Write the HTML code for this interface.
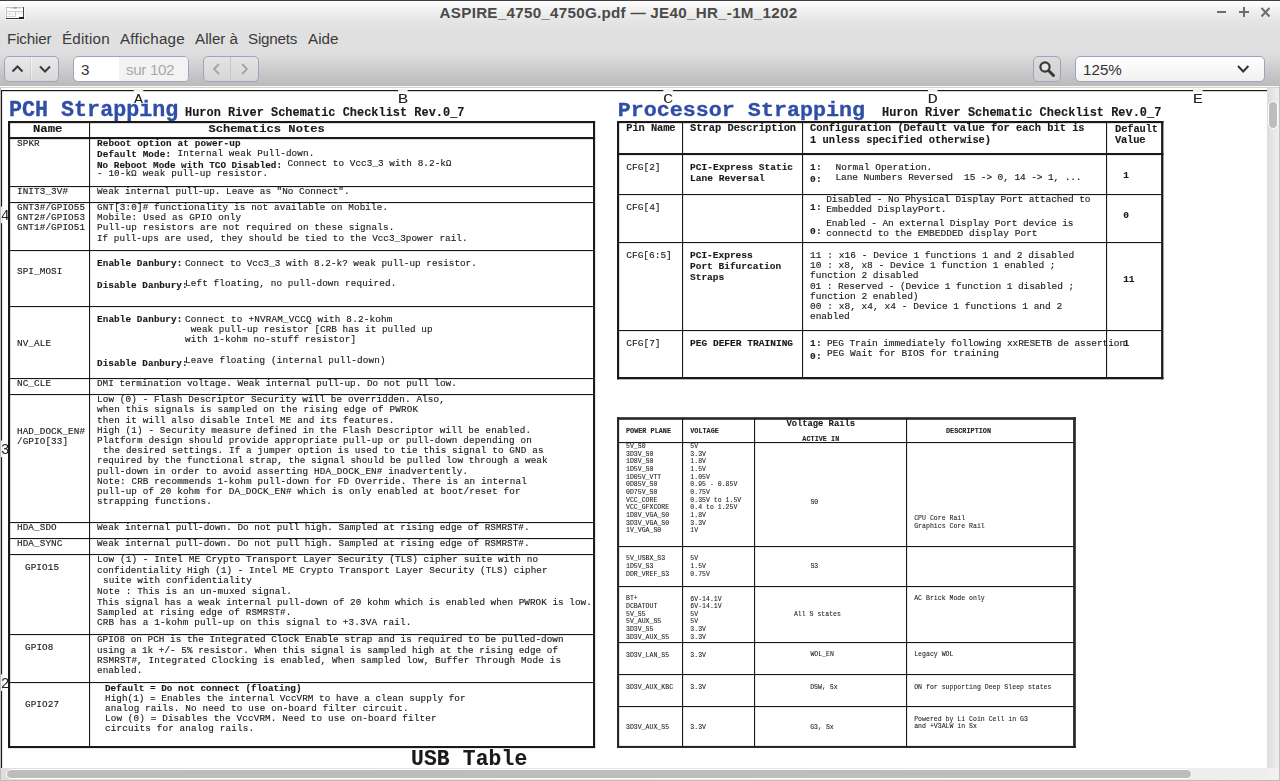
<!DOCTYPE html>
<html lang="fr"><head><meta charset="utf-8">
<title>ASPIRE_4750_4750G.pdf — JE40_HR_-1M_1202</title>
<style>
html,body{margin:0;padding:0;}
body{width:1280px;height:781px;overflow:hidden;position:relative;background:#fff;font-family:"Liberation Sans",sans-serif;color:#3c3c3c;}
.abs{position:absolute;}
#top{left:0;top:0;width:1280px;height:86px;background:linear-gradient(#ffffff 0px,#ffffff 1px,#f4f4f4 8px,#e6e6e6 20px,#e1e1e1 27px,#dfdfdf 53px,#d5d5d5 62px,#c9c9c9 72px,#c0c0c0 80px,#bbbbbb 86px);}
#topline{left:0;top:0;width:1280px;height:1px;background:#3e3e3e;}
#title{left:0;top:3px;width:1237px;text-align:center;font-weight:bold;font-size:15.2px;letter-spacing:.27px;line-height:20px;color:#4a4a4a;white-space:pre;}
.menu{top:29px;font-size:15.2px;line-height:20px;color:#3a3a3a;white-space:pre;}
.btn{box-sizing:border-box;border:1px solid #9aa6bf;border-radius:5px;background:linear-gradient(#e9e9e9,#d8d8d8);}
.entry{box-sizing:border-box;border:1px solid #9aa6bf;border-radius:5px;background:#fff;}
.sep{width:1px;background:linear-gradient(#f4f4f4,#c4c4c4);}
#view{left:0;top:86px;width:1280px;height:695px;background:#fff;}
#viewtop{left:0;top:86px;width:1280px;height:2px;background:linear-gradient(#f8f8f8 0,#f8f8f8 1px,#d6d3cd 1px,#d6d3cd 2px);}
#vscroll{left:1267px;top:88px;width:12px;height:680px;background:linear-gradient(90deg,#dcdcdc,#f0f0f0);}
#vthumb{box-sizing:border-box;left:1268px;top:101px;width:10px;height:28px;border-radius:5px;background:#bdbdbd;border:1px solid #fff;}
#hscroll{left:1px;top:768px;width:1278px;height:12px;background:linear-gradient(90deg,#dedede 0,#e6e6e6 40%,#eeeeee 100%);}
#hthumb{box-sizing:border-box;left:6px;top:769px;width:1186px;height:10px;border-radius:5px;background:#bdbdbd;border:1px solid #fff;}
#edgeL{left:0;top:88px;width:1px;height:693px;background:#c2beb7;}
#edgeR{left:1279px;top:86px;width:1px;height:695px;background:#c6c2bb;}
#edgeB{left:0;top:780px;width:1280px;height:1px;background:#c2beb7;}
#corner{left:1267px;top:768px;width:12px;height:12px;background:#f0f0ee;}
svg.page{fill:#1a1a1a;will-change:transform;}
svg.page text{font-family:'Liberation Mono',monospace;white-space:pre;}
</style></head><body>
<div class="abs" id="top"></div>
<div class="abs" id="topline"></div>
<!-- window icon -->
<svg class="abs" style="left:5px;top:6px" width="20" height="14" viewBox="-1 -1 20 14"><rect x="-1" y="-1" width="20" height="14" fill="#fbfbfb" opacity=".7"/><rect x="0" y="0" width="18" height="12" fill="#fff"/><rect x="0" y="0" width="1" height="12" fill="#c2c2c2"/><rect x="0" y="0" width="18" height="0.8" fill="#b4b4b4"/><rect x="17" y="0" width="1" height="12" fill="#454545"/><rect x="0" y="11" width="18" height="1" fill="#333"/><rect x="7.3" y="0.3" width="3.6" height="1.3" fill="#8c8c8c"/><rect x="4" y="1.3" width="3" height=".6" fill="#cfcfcf"/><rect x="12" y="1.3" width="3" height=".6" fill="#cfcfcf"/><rect x="1" y="4.3" width="16" height=".7" fill="#b9b9b9"/><rect x="9.1" y="4.5" width=".8" height="5" fill="#b9b9b9"/><rect x="1" y="9" width="8.6" height=".7" fill="#c4c4c4"/><rect x="1.5" y="6" width="5" height=".6" fill="#dcdcdc"/><rect x="1.5" y="7.4" width="6.5" height=".6" fill="#dcdcdc"/><rect x="10.5" y="5.8" width="6" height=".6" fill="#d0d0d0"/><rect x="13" y="10" width="5" height="2" fill="#222"/></svg>
<div class="abs" id="title">ASPIRE_4750_4750G.pdf — JE40_HR_-1M_1202</div>
<!-- window buttons -->
<svg class="abs" style="left:1210px;top:4px" width="66" height="17" viewBox="0 0 66 17"><g stroke="#6e6e6e" stroke-width="2" fill="none"><path d="M7 8H16"/><path d="M29 8H39M34 3V13"/><path d="M51.5 4L59.5 12.5M59.5 4L51.5 12.5"/></g></svg>
<!-- menu -->
<div class="abs menu" style="left:7px;letter-spacing:-.15px">Fichier</div>
<div class="abs menu" style="left:62px;letter-spacing:.2px">Édition</div>
<div class="abs menu" style="left:120px;letter-spacing:.2px">Affichage</div>
<div class="abs menu" style="left:195px">Aller à</div>
<div class="abs menu" style="left:248px;letter-spacing:-.2px">Signets</div>
<div class="abs menu" style="left:308px">Aide</div>
<!-- toolbar -->
<div class="abs btn" style="left:4px;top:56px;width:55px;height:26px"></div>
<div class="abs" style="left:30px;top:57px;width:1px;height:24px;background:linear-gradient(#dadada,#c4c4c4)"></div><div class="abs" style="left:31px;top:57px;width:1px;height:24px;background:linear-gradient(#f8f8f8,#e8e8e8)"></div>
<svg class="abs" style="left:4px;top:56px" width="55" height="26" viewBox="0 0 55 26"><g stroke="#3a3a3a" stroke-width="2" fill="none"><path d="M8.5 15.5L13.5 10.5L18.5 15.5"/><path d="M36 10.5L41 15.5L46 10.5"/></g></svg>
<div class="abs entry" style="left:73px;top:56px;width:116px;height:26px;overflow:hidden"><div class="abs" style="left:45px;top:0;width:70px;height:24px;background:#f3f3f3"></div>
<div class="abs" style="left:7px;top:3px;font-size:15.2px;line-height:20px;color:#333">3</div>
<div class="abs" style="left:52px;top:3px;font-size:15.2px;line-height:20px;color:#a9a9a9;white-space:pre;letter-spacing:-.35px">sur 102</div></div>
<div class="abs btn" style="left:203px;top:56px;width:56px;height:26px;background:linear-gradient(#e4e4e4,#d6d6d6)"></div>
<div class="abs sep" style="left:230px;top:57px;height:24px;background:#c6c6c6"></div>
<svg class="abs" style="left:203px;top:56px" width="56" height="26" viewBox="0 0 56 26"><g stroke="#a4a4a4" stroke-width="1.8" fill="none"><path d="M16 8L11 13L16 18"/><path d="M39 8L44 13L39 18"/></g></svg>
<div class="abs btn" style="left:1033px;top:56px;width:28px;height:26px;background:linear-gradient(#dcdcdc,#d0d0d0)"></div>
<svg class="abs" style="left:1033px;top:56px" width="28" height="26" viewBox="0 0 28 26"><circle cx="12" cy="11" r="4.6" stroke="#3a3a3a" stroke-width="2.2" fill="#e6e6e6"/><path d="M15.5 14.5L20.5 19.5" stroke="#3a3a3a" stroke-width="3" stroke-linecap="round"/></svg>
<div class="abs entry" style="left:1075px;top:56px;width:190px;height:26px;background:linear-gradient(#ffffff,#f1f1f1)"></div>
<div class="abs" style="left:1083px;top:60px;font-size:15.2px;line-height:20px;color:#333">125%</div>
<svg class="abs" style="left:1234px;top:62px" width="18" height="14" viewBox="0 0 18 14"><path d="M4 4L9.2 9.5L14.4 4" stroke="#333" stroke-width="2" fill="none"/></svg>
<!-- document view -->
<div class="abs" id="view"></div>
<div class="abs" id="viewtop"></div>
<svg class="abs page" style="left:0;top:0" width="1267" height="768" viewBox="0 0 1267 768">
<rect x="1.00" y="90.00" width="1266.00" height="1.20" fill="#1c1819"/>
<rect x="1.00" y="90.00" width="1.10" height="678.00" fill="#1c1819"/>
<rect x="133.70" y="89.00" width="9.60" height="3.00" fill="#f0f0f0"/>
<text x="134.10" y="102.8" font-size="13.4" font-family="'Liberation Sans',sans-serif" fill="#222" textLength="9.0" lengthAdjust="spacingAndGlyphs">A</text>
<rect x="398.10" y="89.00" width="9.60" height="3.00" fill="#f0f0f0"/>
<text x="397.80" y="102.8" font-size="13.4" font-family="'Liberation Sans',sans-serif" fill="#222" textLength="10.4" lengthAdjust="spacingAndGlyphs">B</text>
<rect x="663.30" y="89.00" width="9.60" height="3.00" fill="#f0f0f0"/>
<text x="663.00" y="102.8" font-size="13.4" font-family="'Liberation Sans',sans-serif" fill="#222" textLength="10.4" lengthAdjust="spacingAndGlyphs">C</text>
<rect x="927.90" y="89.00" width="9.60" height="3.00" fill="#f0f0f0"/>
<text x="927.60" y="102.8" font-size="13.4" font-family="'Liberation Sans',sans-serif" fill="#222" textLength="10.4" lengthAdjust="spacingAndGlyphs">D</text>
<rect x="1193.00" y="89.00" width="9.60" height="3.00" fill="#f0f0f0"/>
<text x="1192.70" y="102.8" font-size="13.4" font-family="'Liberation Sans',sans-serif" fill="#222" textLength="10.4" lengthAdjust="spacingAndGlyphs">E</text>
<rect x="1.00" y="206.60" width="1.20" height="16.60" fill="#f4f4f4"/>
<text x="0.90" y="220.00" font-size="14" fill="#222" font-family="'Liberation Sans',sans-serif">4</text>
<rect x="1.00" y="440.60" width="1.20" height="16.60" fill="#f4f4f4"/>
<text x="0.90" y="454.00" font-size="14" fill="#222" font-family="'Liberation Sans',sans-serif">3</text>
<rect x="1.00" y="674.40" width="1.20" height="16.60" fill="#f4f4f4"/>
<text x="0.90" y="687.80" font-size="14" fill="#222" font-family="'Liberation Sans',sans-serif">2</text>
<text x="9.00" y="116.25" font-size="21.3" font-weight="bold" fill="#2f4ea6" textLength="169.28" lengthAdjust="spacingAndGlyphs" stroke="#2f4ea6" stroke-width="0.3">PCH Strapping</text>
<text x="185.00" y="116.30" font-size="11.9" font-weight="bold" textLength="279.51" stroke="#1a1a1a" stroke-width="0.14">Huron River Schematic Checklist Rev.0_7</text>
<rect x="8.00" y="121.00" width="587.10" height="2.15" fill="#1c1819"/>
<rect x="8.00" y="137.00" width="587.10" height="2.15" fill="#1c1819"/>
<rect x="8.00" y="746.00" width="587.10" height="2.10" fill="#1c1819"/>
<rect x="8.00" y="121.00" width="2.15" height="627.00" fill="#1c1819"/>
<rect x="593.00" y="121.00" width="2.10" height="627.00" fill="#1c1819"/>
<rect x="89.00" y="122.00" width="1.10" height="624.00" fill="#1c1819"/>
<rect x="9.50" y="186.00" width="584.10" height="1.10" fill="#1c1819"/>
<rect x="9.50" y="202.00" width="584.10" height="1.10" fill="#1c1819"/>
<rect x="9.50" y="250.00" width="584.10" height="1.10" fill="#1c1819"/>
<rect x="9.50" y="306.00" width="584.10" height="1.10" fill="#1c1819"/>
<rect x="9.50" y="378.00" width="584.10" height="1.10" fill="#1c1819"/>
<rect x="9.50" y="394.00" width="584.10" height="1.10" fill="#1c1819"/>
<rect x="9.50" y="522.00" width="584.10" height="1.10" fill="#1c1819"/>
<rect x="9.50" y="538.00" width="584.10" height="1.10" fill="#1c1819"/>
<rect x="9.50" y="554.00" width="584.10" height="1.10" fill="#1c1819"/>
<rect x="9.50" y="634.00" width="584.10" height="1.10" fill="#1c1819"/>
<rect x="9.50" y="682.00" width="584.10" height="1.10" fill="#1c1819"/>
<text x="33.00" y="132.00" font-size="10.8" font-weight="bold" textLength="29.45" lengthAdjust="spacingAndGlyphs" stroke="#1a1a1a" stroke-width="0.14">Name</text>
<text x="208.60" y="132.00" font-size="10.8" font-weight="bold" textLength="116.05" lengthAdjust="spacingAndGlyphs" stroke="#1a1a1a" stroke-width="0.14">Schematics Notes</text>
<text x="17.00" y="145.75" font-size="9.3" textLength="22.68" stroke="#1a1a1a" stroke-width="0.14">SPKR</text>
<text x="97.00" y="145.75" font-size="9.3" font-weight="bold" textLength="143.56" stroke="#1a1a1a" stroke-width="0.14">Reboot option at power-up</text>
<text x="97.00" y="156.75" font-size="9.3" font-weight="bold" textLength="74.06" stroke="#1a1a1a" stroke-width="0.14">Default Mode:</text>
<text x="177.50" y="155.50" font-size="9.3" textLength="136.81" stroke="#1a1a1a" stroke-width="0.14">Internal weak Pull-down.</text>
<text x="97.00" y="167.50" font-size="9.3" font-weight="bold" textLength="185.06" stroke="#1a1a1a" stroke-width="0.14">No Reboot Mode with TCO Disabled:</text>
<text x="287.50" y="165.50" font-size="9.3" textLength="164.06" stroke="#1a1a1a" stroke-width="0.14">Connect to Vcc3_3 with 8.2-kΩ</text>
<text x="97.00" y="176.00" font-size="9.3" textLength="171.06" stroke="#1a1a1a" stroke-width="0.14">- 10-kΩ weak pull-up resistor.</text>
<text x="17.00" y="193.75" font-size="9.3" textLength="51.03" stroke="#1a1a1a" stroke-width="0.14">INIT3_3V#</text>
<text x="97.00" y="193.75" font-size="9.3" textLength="252.56" stroke="#1a1a1a" stroke-width="0.14">Weak internal pull-up. Leave as "No Connect".</text>
<text x="17.00" y="210.00" font-size="9.3" textLength="68.04" stroke="#1a1a1a" stroke-width="0.14">GNT3#/GPIO55</text>
<text x="17.00" y="220.00" font-size="9.3" textLength="68.04" stroke="#1a1a1a" stroke-width="0.14">GNT2#/GPIO53</text>
<text x="17.00" y="229.60" font-size="9.3" textLength="68.04" stroke="#1a1a1a" stroke-width="0.14">GNT1#/GPIO51</text>
<text x="97.00" y="210.00" font-size="9.3" textLength="291.06" stroke="#1a1a1a" stroke-width="0.14">GNT[3:0]# functionality is not available on Mobile.</text>
<text x="97.00" y="220.00" font-size="9.3" textLength="144.06" stroke="#1a1a1a" stroke-width="0.14">Mobile: Used as GPIO only</text>
<text x="97.00" y="229.75" font-size="9.3" textLength="297.31" stroke="#1a1a1a" stroke-width="0.14">Pull-up resistors are not required on these signals.</text>
<text x="97.00" y="240.50" font-size="9.3" textLength="370.56" stroke="#1a1a1a" stroke-width="0.14">If pull-ups are used, they should be tied to the Vcc3_3power rail.</text>
<text x="17.00" y="273.75" font-size="9.3" textLength="45.36" stroke="#1a1a1a" stroke-width="0.14">SPI_MOSI</text>
<text x="97.00" y="266.00" font-size="9.3" font-weight="bold" textLength="85.31" stroke="#1a1a1a" stroke-width="0.14">Enable Danbury:</text>
<text x="185.00" y="266.00" font-size="9.3" textLength="291.81" stroke="#1a1a1a" stroke-width="0.14">Connect to Vcc3_3 with 8.2-k? weak pull-up resistor.</text>
<text x="97.00" y="288.00" font-size="9.3" font-weight="bold" textLength="90.56" stroke="#1a1a1a" stroke-width="0.14">Disable Danbury:</text>
<text x="185.00" y="286.25" font-size="9.3" textLength="211.31" stroke="#1a1a1a" stroke-width="0.14">Left floating, no pull-down required.</text>
<text x="17.00" y="345.75" font-size="9.3" textLength="34.02" stroke="#1a1a1a" stroke-width="0.14">NV_ALE</text>
<text x="97.00" y="322.00" font-size="9.3" font-weight="bold" textLength="85.31" stroke="#1a1a1a" stroke-width="0.14">Enable Danbury:</text>
<text x="185.00" y="322.00" font-size="9.3" textLength="207.31" stroke="#1a1a1a" stroke-width="0.14">Connect to +NVRAM_VCCQ with 8.2-kohm</text>
<text x="190.75" y="332.00" font-size="9.3" textLength="241.81" stroke="#1a1a1a" stroke-width="0.14">weak pull-up resistor [CRB has it pulled up</text>
<text x="185.00" y="342.00" font-size="9.3" textLength="171.06" stroke="#1a1a1a" stroke-width="0.14">with 1-kohm no-stuff resistor]</text>
<text x="97.00" y="365.75" font-size="9.3" font-weight="bold" textLength="90.56" stroke="#1a1a1a" stroke-width="0.14">Disable Danbury:</text>
<text x="185.00" y="363.00" font-size="9.3" textLength="200.56" stroke="#1a1a1a" stroke-width="0.14">Leave floating (internal pull-down)</text>
<text x="17.00" y="385.75" font-size="9.3" textLength="34.02" stroke="#1a1a1a" stroke-width="0.14">NC_CLE</text>
<text x="97.00" y="385.75" font-size="9.3" textLength="359.81" stroke="#1a1a1a" stroke-width="0.14">DMI termination voltage. Weak internal pull-up. Do not pull low.</text>
<text x="17.00" y="434.25" font-size="9.3" textLength="68.04" stroke="#1a1a1a" stroke-width="0.14">HAD_DOCK_EN#</text>
<text x="17.00" y="444.25" font-size="9.3" textLength="51.03" stroke="#1a1a1a" stroke-width="0.14">/GPIO[33]</text>
<text x="97.00" y="401.75" font-size="9.3" textLength="347.81" stroke="#1a1a1a" stroke-width="0.14">Low (0) - Flash Descriptor Security will be overridden. Also,</text>
<text x="97.00" y="411.75" font-size="9.3" textLength="321.06" stroke="#1a1a1a" stroke-width="0.14">when this signals is sampled on the rising edge of PWROK</text>
<text x="97.00" y="422.50" font-size="9.3" textLength="297.31" stroke="#1a1a1a" stroke-width="0.14">then it will also disable Intel ME and its features.</text>
<text x="97.00" y="432.50" font-size="9.3" textLength="434.06" stroke="#1a1a1a" stroke-width="0.14">High (1) - Security measure defined in the Flash Descriptor will be enabled.</text>
<text x="97.00" y="442.50" font-size="9.3" textLength="434.81" stroke="#1a1a1a" stroke-width="0.14">Platform design should provide appropriate pull-up or pull-down depending on</text>
<text x="103.00" y="452.50" font-size="9.3" textLength="440.56" stroke="#1a1a1a" stroke-width="0.14">the desired settings. If a jumper option is used to tie this signal to GND as</text>
<text x="97.00" y="462.50" font-size="9.3" textLength="450.56" stroke="#1a1a1a" stroke-width="0.14">required by the functional strap, the signal should be pulled low through a weak</text>
<text x="97.00" y="473.50" font-size="9.3" textLength="371.06" stroke="#1a1a1a" stroke-width="0.14">pull-down in order to avoid asserting HDA_DOCK_EN# inadvertently.</text>
<text x="97.00" y="483.50" font-size="9.3" textLength="429.81" stroke="#1a1a1a" stroke-width="0.14">Note: CRB recommends 1-kohm pull-down for FD Override. There is an internal</text>
<text x="97.00" y="493.50" font-size="9.3" textLength="423.56" stroke="#1a1a1a" stroke-width="0.14">pull-up of 20 kohm for DA_DOCK_EN# which is only enabled at boot/reset for</text>
<text x="97.00" y="503.75" font-size="9.3" textLength="114.81" stroke="#1a1a1a" stroke-width="0.14">strapping functions.</text>
<text x="17.00" y="529.50" font-size="9.3" textLength="39.69" stroke="#1a1a1a" stroke-width="0.14">HDA_SDO</text>
<text x="97.00" y="529.50" font-size="9.3" textLength="432.56" stroke="#1a1a1a" stroke-width="0.14">Weak internal pull-down. Do not pull high. Sampled at rising edge of RSMRST#.</text>
<text x="17.00" y="545.75" font-size="9.3" textLength="45.36" stroke="#1a1a1a" stroke-width="0.14">HDA_SYNC</text>
<text x="97.00" y="545.75" font-size="9.3" textLength="432.56" stroke="#1a1a1a" stroke-width="0.14">Weak internal pull-down. Do not pull high. Sampled at rising edge of RSMRST#.</text>
<text x="25.00" y="569.50" font-size="9.3" textLength="34.02" stroke="#1a1a1a" stroke-width="0.14">GPIO15</text>
<text x="97.00" y="561.75" font-size="9.3" textLength="441.06" stroke="#1a1a1a" stroke-width="0.14">Low (1) - Intel ME Crypto Transport Layer Security (TLS) cipher suite with no</text>
<text x="97.00" y="572.75" font-size="9.3" textLength="450.56" stroke="#1a1a1a" stroke-width="0.14">confidentiality High (1) - Intel ME Crypto Transport Layer Security (TLS) cipher</text>
<text x="103.00" y="582.75" font-size="9.3" textLength="148.81" stroke="#1a1a1a" stroke-width="0.14">suite with confidentiality</text>
<text x="97.00" y="593.75" font-size="9.3" textLength="194.81" stroke="#1a1a1a" stroke-width="0.14">Note : This is an un-muxed signal.</text>
<text x="97.00" y="604.50" font-size="9.3" textLength="494.81" stroke="#1a1a1a" stroke-width="0.14">This signal has a weak internal pull-down of 20 kohm which is enabled when PWROK is low.</text>
<text x="97.00" y="614.75" font-size="9.3" textLength="194.31" stroke="#1a1a1a" stroke-width="0.14">Sampled at rising edge of RSMRST#.</text>
<text x="97.00" y="624.75" font-size="9.3" textLength="314.31" stroke="#1a1a1a" stroke-width="0.14">CRB has a 1-kohm pull-up on this signal to +3.3VA rail.</text>
<text x="25.00" y="649.50" font-size="9.3" textLength="28.35" stroke="#1a1a1a" stroke-width="0.14">GPIO8</text>
<text x="97.00" y="642.00" font-size="9.3" textLength="466.56" stroke="#1a1a1a" stroke-width="0.14">GPIO8 on PCH is the Integrated Clock Enable strap and is required to be pulled-down</text>
<text x="97.00" y="652.75" font-size="9.3" textLength="461.06" stroke="#1a1a1a" stroke-width="0.14">using a 1k +/- 5% resistor. When this signal is sampled high at the rising edge of</text>
<text x="97.00" y="662.75" font-size="9.3" textLength="464.06" stroke="#1a1a1a" stroke-width="0.14">RSMRST#, Integrated Clocking is enabled, When sampled low, Buffer Through Mode is</text>
<text x="97.00" y="672.75" font-size="9.3" textLength="45.31" stroke="#1a1a1a" stroke-width="0.14">enabled.</text>
<text x="25.00" y="706.75" font-size="9.3" textLength="34.02" stroke="#1a1a1a" stroke-width="0.14">GPIO27</text>
<text x="105.00" y="691.00" font-size="9.3" font-weight="bold" textLength="196.56" stroke="#1a1a1a" stroke-width="0.14">Default = Do not connect (floating)</text>
<text x="105.00" y="701.00" font-size="9.3" textLength="360.56" stroke="#1a1a1a" stroke-width="0.14">High(1) = Enables the internal VccVRM to have a clean supply for</text>
<text x="105.00" y="711.00" font-size="9.3" textLength="303.56" stroke="#1a1a1a" stroke-width="0.14">analog rails. No need to use on-board filter circuit.</text>
<text x="105.00" y="721.00" font-size="9.3" textLength="331.56" stroke="#1a1a1a" stroke-width="0.14">Low (0) = Disables the VccVRM. Need to use on-board filter</text>
<text x="105.00" y="730.75" font-size="9.3" textLength="149.06" stroke="#1a1a1a" stroke-width="0.14">circuits for analog rails.</text>
<text x="411.00" y="765.30" font-size="21.3" font-weight="bold" textLength="116.28" stroke="#1a1a1a" stroke-width="0.14">USB Table</text>
<text x="617.80" y="115.90" font-size="20" font-weight="bold" fill="#2f4ea6" textLength="247.15" lengthAdjust="spacingAndGlyphs" stroke="#2f4ea6" stroke-width="0.3">Processor Strapping</text>
<text x="882.00" y="116.20" font-size="11.9" font-weight="bold" textLength="279.31" stroke="#1a1a1a" stroke-width="0.14">Huron River Schematic Checklist Rev.0_7</text>
<rect x="617.00" y="121.00" width="546.40" height="2.15" fill="#1c1819"/>
<rect x="617.00" y="153.00" width="546.40" height="2.10" fill="#1c1819"/>
<rect x="617.00" y="377.00" width="546.40" height="2.30" fill="#1c1819"/>
<rect x="617.00" y="121.00" width="2.15" height="258.30" fill="#1c1819"/>
<rect x="1161.10" y="121.00" width="2.30" height="258.30" fill="#1c1819"/>
<rect x="682.00" y="122.00" width="1.10" height="256.00" fill="#1c1819"/>
<rect x="802.00" y="122.00" width="1.10" height="256.00" fill="#1c1819"/>
<rect x="1106.00" y="122.00" width="1.10" height="256.00" fill="#1c1819"/>
<rect x="618.00" y="194.00" width="544.60" height="1.10" fill="#1c1819"/>
<rect x="618.00" y="242.00" width="544.60" height="1.10" fill="#1c1819"/>
<rect x="618.00" y="330.00" width="544.60" height="1.10" fill="#1c1819"/>
<text x="626.25" y="131.25" font-size="10.4" font-weight="bold" textLength="49.37" stroke="#1a1a1a" stroke-width="0.14">Pin Name</text>
<text x="690.00" y="131.25" font-size="10.4" font-weight="bold" textLength="106.12" stroke="#1a1a1a" stroke-width="0.14">Strap Description</text>
<text x="810.00" y="131.25" font-size="10.4" font-weight="bold" textLength="274.62" stroke="#1a1a1a" stroke-width="0.14">Configuration (Default value for each bit is</text>
<text x="810.00" y="142.50" font-size="10.4" font-weight="bold" textLength="181.12" stroke="#1a1a1a" stroke-width="0.14">1 unless specified otherwise)</text>
<text x="1115.00" y="131.60" font-size="10.4" font-weight="bold" textLength="43.12" stroke="#1a1a1a" stroke-width="0.14">Default</text>
<text x="1115.00" y="143.40" font-size="10.4" font-weight="bold" textLength="30.42" stroke="#1a1a1a" stroke-width="0.14">Value</text>
<text x="626.25" y="170.00" font-size="9.5" textLength="34.32" stroke="#1a1a1a" stroke-width="0.14">CFG[2]</text>
<text x="690.00" y="170.00" font-size="9.5" font-weight="bold" textLength="103.07" stroke="#1a1a1a" stroke-width="0.14">PCI-Express Static</text>
<text x="690.00" y="180.75" font-size="9.5" font-weight="bold" textLength="74.82" stroke="#1a1a1a" stroke-width="0.14">Lane Reversal</text>
<text x="810.00" y="170.00" font-size="9.5" font-weight="bold" textLength="11.82" stroke="#1a1a1a" stroke-width="0.14">1:</text>
<text x="835.50" y="169.60" font-size="9.5" textLength="96.82" stroke="#1a1a1a" stroke-width="0.14">Normal Operation.</text>
<text x="810.00" y="182.00" font-size="9.5" font-weight="bold" textLength="11.82" stroke="#1a1a1a" stroke-width="0.14">0:</text>
<text x="835.50" y="180.00" font-size="9.5" textLength="246.07" stroke="#1a1a1a" stroke-width="0.14">Lane Numbers Reversed  15 -&gt; 0, 14 -&gt; 1, ...</text>
<text x="1123.30" y="178.00" font-size="9.5" font-weight="bold" textLength="5.70" stroke="#1a1a1a" stroke-width="0.14">1</text>
<text x="626.25" y="210.00" font-size="9.5" textLength="34.32" stroke="#1a1a1a" stroke-width="0.14">CFG[4]</text>
<text x="810.00" y="210.00" font-size="9.5" font-weight="bold" textLength="11.82" stroke="#1a1a1a" stroke-width="0.14">1:</text>
<text x="826.25" y="201.75" font-size="9.5" textLength="264.32" stroke="#1a1a1a" stroke-width="0.14">Disabled - No Physical Display Port attached to</text>
<text x="826.25" y="211.75" font-size="9.5" textLength="120.32" stroke="#1a1a1a" stroke-width="0.14">Embedded DisplayPort.</text>
<text x="810.00" y="234.25" font-size="9.5" font-weight="bold" textLength="11.82" stroke="#1a1a1a" stroke-width="0.14">0:</text>
<text x="826.25" y="225.50" font-size="9.5" textLength="247.32" stroke="#1a1a1a" stroke-width="0.14">Enabled - An external Display Port device is</text>
<text x="826.25" y="235.75" font-size="9.5" textLength="211.32" stroke="#1a1a1a" stroke-width="0.14">connectd to the EMBEDDED display Port</text>
<text x="1123.30" y="217.60" font-size="9.5" font-weight="bold" textLength="5.70" stroke="#1a1a1a" stroke-width="0.14">0</text>
<text x="626.25" y="258.00" font-size="9.5" textLength="45.57" stroke="#1a1a1a" stroke-width="0.14">CFG[6:5]</text>
<text x="690.00" y="258.00" font-size="9.5" font-weight="bold" textLength="62.70" stroke="#1a1a1a" stroke-width="0.14">PCI-Express</text>
<text x="690.00" y="268.75" font-size="9.5" font-weight="bold" textLength="91.20" stroke="#1a1a1a" stroke-width="0.14">Port Bifurcation</text>
<text x="690.00" y="280.00" font-size="9.5" font-weight="bold" textLength="34.20" stroke="#1a1a1a" stroke-width="0.14">Straps</text>
<text x="810.00" y="258.00" font-size="9.5" textLength="264.17" stroke="#1a1a1a" stroke-width="0.14">11 : x16 - Device 1 functions 1 and 2 disabled</text>
<text x="810.00" y="268.00" font-size="9.5" textLength="245.57" stroke="#1a1a1a" stroke-width="0.14">10 : x8, x8 - Device 1 function 1 enabled ;</text>
<text x="810.00" y="278.00" font-size="9.5" textLength="108.57" stroke="#1a1a1a" stroke-width="0.14">function 2 disabled</text>
<text x="810.00" y="289.00" font-size="9.5" textLength="264.17" stroke="#1a1a1a" stroke-width="0.14">01 : Reserved - (Device 1 function 1 disabled ;</text>
<text x="810.00" y="299.00" font-size="9.5" textLength="108.57" stroke="#1a1a1a" stroke-width="0.14">function 2 enabled)</text>
<text x="810.00" y="309.00" font-size="9.5" textLength="252.27" stroke="#1a1a1a" stroke-width="0.14">00 : x8, x4, x4 - Device 1 functions 1 and 2</text>
<text x="810.00" y="318.75" font-size="9.5" textLength="39.82" stroke="#1a1a1a" stroke-width="0.14">enabled</text>
<text x="1123.30" y="281.80" font-size="9.5" font-weight="bold" textLength="11.07" stroke="#1a1a1a" stroke-width="0.14">11</text>
<text x="626.25" y="346.25" font-size="9.5" textLength="34.32" stroke="#1a1a1a" stroke-width="0.14">CFG[7]</text>
<text x="690.00" y="346.25" font-size="9.5" font-weight="bold" textLength="103.07" stroke="#1a1a1a" stroke-width="0.14">PEG DEFER TRAINING</text>
<text x="810.00" y="346.25" font-size="9.5" font-weight="bold" textLength="11.82" stroke="#1a1a1a" stroke-width="0.14">1:</text>
<text x="827.00" y="346.25" font-size="9.5" textLength="298.17" stroke="#1a1a1a" stroke-width="0.14">PEG Train immediately following xxRESETB de assertion</text>
<text x="810.00" y="359.00" font-size="9.5" font-weight="bold" textLength="11.82" stroke="#1a1a1a" stroke-width="0.14">0:</text>
<text x="827.00" y="356.25" font-size="9.5" textLength="172.07" stroke="#1a1a1a" stroke-width="0.14">PEG Wait for BIOS for training</text>
<text x="1123.50" y="346.00" font-size="9.5" font-weight="bold" textLength="5.70" stroke="#1a1a1a" stroke-width="0.14">1</text>
<rect x="617.00" y="417.20" width="458.80" height="2.60" fill="#2a2627"/>
<rect x="617.00" y="745.90" width="458.80" height="2.10" fill="#2a2627"/>
<rect x="617.00" y="417.20" width="2.15" height="330.80" fill="#2a2627"/>
<rect x="1073.10" y="417.20" width="2.70" height="330.80" fill="#2a2627"/>
<rect x="682.00" y="418.00" width="1.10" height="328.00" fill="#1c1819"/>
<rect x="754.00" y="418.00" width="1.10" height="328.00" fill="#1c1819"/>
<rect x="906.00" y="418.00" width="1.10" height="328.00" fill="#1c1819"/>
<rect x="618.00" y="442.00" width="457.30" height="1.10" fill="#1c1819"/>
<rect x="618.00" y="546.00" width="457.30" height="1.10" fill="#1c1819"/>
<rect x="618.00" y="586.00" width="457.30" height="1.10" fill="#1c1819"/>
<rect x="618.00" y="642.00" width="457.30" height="1.10" fill="#1c1819"/>
<rect x="618.00" y="674.00" width="457.30" height="1.10" fill="#1c1819"/>
<rect x="618.00" y="706.00" width="457.30" height="1.10" fill="#1c1819"/>
<text x="626.00" y="432.60" font-size="6.8" font-weight="bold" fill="#222" textLength="44.99" stroke="#222" stroke-width="0.08">POWER PLANE</text>
<text x="690.30" y="432.60" font-size="6.8" font-weight="bold" fill="#222" textLength="28.49" stroke="#222" stroke-width="0.08">VOLTAGE</text>
<text x="786.40" y="426.00" font-size="8.85" font-weight="bold" textLength="68.63" stroke="#1a1a1a" stroke-width="0.14">Voltage Rails</text>
<text x="802.30" y="440.60" font-size="6.8" font-weight="bold" fill="#222" textLength="36.99" stroke="#222" stroke-width="0.08">ACTIVE IN</text>
<text x="946.00" y="432.90" font-size="6.8" font-weight="bold" fill="#222" textLength="44.99" stroke="#222" stroke-width="0.08">DESCRIPTION</text>
<text x="626.00" y="448.00" font-size="6.5" fill="#222" textLength="19.60" stroke="#222" stroke-width="0.08">5V_S0</text>
<text x="690.30" y="448.00" font-size="6.5" fill="#222" textLength="7.84" stroke="#222" stroke-width="0.08">5V</text>
<text x="626.00" y="456.00" font-size="6.5" fill="#222" textLength="27.44" stroke="#222" stroke-width="0.08">3D3V_S0</text>
<text x="690.30" y="456.00" font-size="6.5" fill="#222" textLength="15.68" stroke="#222" stroke-width="0.08">3.3V</text>
<text x="626.00" y="463.00" font-size="6.5" fill="#222" textLength="27.44" stroke="#222" stroke-width="0.08">1D8V_S0</text>
<text x="690.30" y="463.00" font-size="6.5" fill="#222" textLength="15.68" stroke="#222" stroke-width="0.08">1.8V</text>
<text x="626.00" y="471.00" font-size="6.5" fill="#222" textLength="27.44" stroke="#222" stroke-width="0.08">1D5V_S0</text>
<text x="690.30" y="471.00" font-size="6.5" fill="#222" textLength="15.68" stroke="#222" stroke-width="0.08">1.5V</text>
<text x="626.00" y="479.00" font-size="6.5" fill="#222" textLength="35.28" stroke="#222" stroke-width="0.08">1D05V_VTT</text>
<text x="690.30" y="479.00" font-size="6.5" fill="#222" textLength="19.60" stroke="#222" stroke-width="0.08">1.05V</text>
<text x="626.00" y="486.00" font-size="6.5" fill="#222" textLength="31.36" stroke="#222" stroke-width="0.08">0D85V_S0</text>
<text x="690.30" y="486.00" font-size="6.5" fill="#222" textLength="47.04" stroke="#222" stroke-width="0.08">0.95 - 0.85V</text>
<text x="626.00" y="494.00" font-size="6.5" fill="#222" textLength="31.36" stroke="#222" stroke-width="0.08">0D75V_S0</text>
<text x="690.30" y="494.00" font-size="6.5" fill="#222" textLength="19.60" stroke="#222" stroke-width="0.08">0.75V</text>
<text x="626.00" y="502.00" font-size="6.5" fill="#222" textLength="31.36" stroke="#222" stroke-width="0.08">VCC_CORE</text>
<text x="690.30" y="502.00" font-size="6.5" fill="#222" textLength="50.96" stroke="#222" stroke-width="0.08">0.35V to 1.5V</text>
<text x="626.00" y="509.00" font-size="6.5" fill="#222" textLength="43.12" stroke="#222" stroke-width="0.08">VCC_GFXCORE</text>
<text x="690.30" y="509.00" font-size="6.5" fill="#222" textLength="47.04" stroke="#222" stroke-width="0.08">0.4 to 1.25V</text>
<text x="626.00" y="517.00" font-size="6.5" fill="#222" textLength="43.12" stroke="#222" stroke-width="0.08">1D8V_VGA_S0</text>
<text x="690.30" y="517.00" font-size="6.5" fill="#222" textLength="15.68" stroke="#222" stroke-width="0.08">1.8V</text>
<text x="626.00" y="525.00" font-size="6.5" fill="#222" textLength="43.12" stroke="#222" stroke-width="0.08">3D3V_VGA_S0</text>
<text x="690.30" y="525.00" font-size="6.5" fill="#222" textLength="15.68" stroke="#222" stroke-width="0.08">3.3V</text>
<text x="626.00" y="532.00" font-size="6.5" fill="#222" textLength="35.28" stroke="#222" stroke-width="0.08">1V_VGA_S0</text>
<text x="690.30" y="532.00" font-size="6.5" fill="#222" textLength="7.84" stroke="#222" stroke-width="0.08">1V</text>
<text x="810.40" y="504.00" font-size="6.5" fill="#222" textLength="7.84" stroke="#222" stroke-width="0.08">S0</text>
<text x="914.20" y="519.60" font-size="6.5" fill="#222" textLength="50.96" stroke="#222" stroke-width="0.08">CPU Core Rail</text>
<text x="914.20" y="527.60" font-size="6.5" fill="#222" textLength="70.56" stroke="#222" stroke-width="0.08">Graphics Core Rail</text>
<text x="626.00" y="559.90" font-size="6.5" fill="#222" textLength="39.20" stroke="#222" stroke-width="0.08">5V_USBX_S3</text>
<text x="690.30" y="559.90" font-size="6.5" fill="#222" textLength="7.84" stroke="#222" stroke-width="0.08">5V</text>
<text x="626.00" y="567.80" font-size="6.5" fill="#222" textLength="27.44" stroke="#222" stroke-width="0.08">1D5V_S3</text>
<text x="690.30" y="567.80" font-size="6.5" fill="#222" textLength="15.68" stroke="#222" stroke-width="0.08">1.5V</text>
<text x="626.00" y="575.80" font-size="6.5" fill="#222" textLength="43.12" stroke="#222" stroke-width="0.08">DDR_VREF_S3</text>
<text x="690.30" y="575.80" font-size="6.5" fill="#222" textLength="19.60" stroke="#222" stroke-width="0.08">0.75V</text>
<text x="810.40" y="567.80" font-size="6.5" fill="#222" textLength="7.84" stroke="#222" stroke-width="0.08">S3</text>
<text x="626.00" y="600.00" font-size="6.5" fill="#222" textLength="11.76" stroke="#222" stroke-width="0.08">BT+</text>
<text x="690.30" y="601.00" font-size="6.5" fill="#222" textLength="31.36" stroke="#222" stroke-width="0.08">6V-14.1V</text>
<text x="626.00" y="607.70" font-size="6.5" fill="#222" textLength="31.36" stroke="#222" stroke-width="0.08">DCBATOUT</text>
<text x="690.30" y="607.70" font-size="6.5" fill="#222" textLength="31.36" stroke="#222" stroke-width="0.08">6V-14.1V</text>
<text x="626.00" y="615.60" font-size="6.5" fill="#222" textLength="19.60" stroke="#222" stroke-width="0.08">5V_S5</text>
<text x="690.30" y="615.60" font-size="6.5" fill="#222" textLength="7.84" stroke="#222" stroke-width="0.08">5V</text>
<text x="626.00" y="623.10" font-size="6.5" fill="#222" textLength="35.28" stroke="#222" stroke-width="0.08">5V_AUX_S5</text>
<text x="690.30" y="623.10" font-size="6.5" fill="#222" textLength="7.84" stroke="#222" stroke-width="0.08">5V</text>
<text x="626.00" y="630.60" font-size="6.5" fill="#222" textLength="27.44" stroke="#222" stroke-width="0.08">3D3V_S5</text>
<text x="690.30" y="630.60" font-size="6.5" fill="#222" textLength="15.68" stroke="#222" stroke-width="0.08">3.3V</text>
<text x="626.00" y="639.10" font-size="6.5" fill="#222" textLength="43.12" stroke="#222" stroke-width="0.08">3D3V_AUX_S5</text>
<text x="690.30" y="639.10" font-size="6.5" fill="#222" textLength="15.68" stroke="#222" stroke-width="0.08">3.3V</text>
<text x="793.90" y="615.80" font-size="6.5" fill="#222" textLength="47.04" stroke="#222" stroke-width="0.08">All S states</text>
<text x="914.20" y="599.80" font-size="6.5" fill="#222" textLength="70.56" stroke="#222" stroke-width="0.08">AC Brick Mode only</text>
<text x="626.00" y="656.70" font-size="6.5" fill="#222" textLength="43.12" stroke="#222" stroke-width="0.08">3D3V_LAN_S5</text>
<text x="690.30" y="656.70" font-size="6.5" fill="#222" textLength="15.68" stroke="#222" stroke-width="0.08">3.3V</text>
<text x="810.40" y="656.00" font-size="6.5" fill="#222" textLength="23.52" stroke="#222" stroke-width="0.08">WOL_EN</text>
<text x="914.20" y="655.80" font-size="6.5" fill="#222" textLength="39.20" stroke="#222" stroke-width="0.08">Legacy WOL</text>
<text x="626.00" y="688.80" font-size="6.5" fill="#222" textLength="47.04" stroke="#222" stroke-width="0.08">3D3V_AUX_KBC</text>
<text x="690.30" y="688.80" font-size="6.5" fill="#222" textLength="15.68" stroke="#222" stroke-width="0.08">3.3V</text>
<text x="810.20" y="688.80" font-size="6.5" fill="#222" textLength="27.44" stroke="#222" stroke-width="0.08">DSW, Sx</text>
<text x="914.20" y="689.00" font-size="6.5" fill="#222" textLength="137.20" stroke="#222" stroke-width="0.08">ON for supporting Deep Sleep states</text>
<text x="626.00" y="729.00" font-size="6.5" fill="#222" textLength="43.12" stroke="#222" stroke-width="0.08">3D3V_AUX_S5</text>
<text x="690.30" y="729.00" font-size="6.5" fill="#222" textLength="15.68" stroke="#222" stroke-width="0.08">3.3V</text>
<text x="810.20" y="729.00" font-size="6.5" fill="#222" textLength="23.52" stroke="#222" stroke-width="0.08">G3, Sx</text>
<text x="914.20" y="721.10" font-size="6.5" fill="#222" textLength="113.68" stroke="#222" stroke-width="0.08">Powered by Li Coin Cell in G3</text>
<text x="914.20" y="728.20" font-size="6.5" fill="#222" textLength="62.72" stroke="#222" stroke-width="0.08">and +V3ALW in Sx</text>
</svg>
<div class="abs" id="vscroll"></div><div class="abs" id="vthumb"></div>
<div class="abs" id="hscroll"></div><div class="abs" id="hthumb"></div>
<div class="abs" id="corner"></div><div class="abs" id="edgeL"></div><div class="abs" id="edgeR"></div><div class="abs" id="edgeB"></div>
</body></html>
